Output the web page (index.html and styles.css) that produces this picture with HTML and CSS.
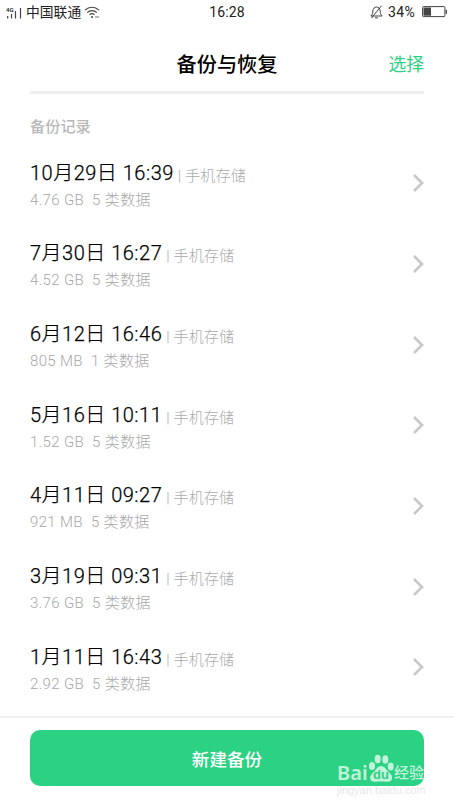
FILE: index.html
```html
<!DOCTYPE html>
<html lang="zh-CN">
<head>
    <meta charset="UTF-8">
    <meta name="viewport" content="width=device-width, initial-scale=1.0">
    <title>备份与恢复</title>
    <link rel="stylesheet" href="styles.css">
</head>
<body>
    <!-- Status bar -->
    <div class="status-bar">
        <div class="status-left">
            <svg class="signal" width="19" height="14" viewBox="0 0 19 14">
                <text x="0" y="5.5" class="network">4G</text>
                <path d="M1.7 10v2.5M5.5 8v4.5M9.5 5v7.5M14.5 2v10.5" stroke="#444" stroke-width="1.2" fill="none"/>
            </svg>
            <span class="carrier">中国联通</span>
            <svg class="wifi" width="16" height="13" viewBox="0 0 16 13" fill="none" stroke="#444" stroke-width="1.1">
                <path d="M1 4.2C5 .2 11 .2 15 4.2M3.2 6.6c2.8-2.7 6.8-2.7 9.6 0M5.5 8.8c1.5-1.4 3.5-1.4 5 0"/>
                <path d="M7 11h2M11.5 11h1M13.5 11h1" stroke-width="1.5"/>
            </svg>
        </div>
        <span class="clock">16:28</span>
        <div class="status-right">
            <svg class="mute" width="13" height="14" viewBox="0 0 13 14" fill="none" stroke="#444" stroke-width="1">
                <path d="M.8 11c1.800-1.300 1.800-3 2-5C3 3.500 4.600 2 6.500 2s3.500 1.500 3.700 4c.2 2 .2 3.700 2 5zM5 12.900h3M11.500 .7L1.500 13"/>
            </svg>
            <span class="percent">34%</span>
            <svg class="battery" width="26" height="12" viewBox="0 0 26 12">
                <rect x=".6" y=".6" width="22.3" height="10" rx=".8" fill="none" stroke="#444" stroke-width="1"/>
                <rect x="1.5" y="1.5" width="7.5" height="8.2" fill="#444"/>
                <path d="M24.3 3.7v4" stroke="#444" stroke-width="1.3"/>
            </svg>
        </div>
    </div>

    <header class="header">
        <h1>备份与恢复</h1>
        <a href="#" class="select-link">选择</a>
    </header>

    <main class="content">
        <h2>备份记录</h2>
        <ul id="backup-list" class="backup-list"></ul>
    </main>

    <footer class="footer">
        <button class="new-backup">新建备份</button>
        <div class="watermark">
            <div class="mark-name">
                <span class="mark-latin">Bai</span>
                <span class="paw">
                    <svg width="27" height="29" viewBox="0 0 27 29">
                        <ellipse cx="4" cy="12" rx="3" ry="4"/>
                        <ellipse cx="9.7" cy="5" rx="3" ry="4.3"/>
                        <ellipse cx="17.3" cy="5.5" rx="3" ry="4.3"/>
                        <ellipse cx="22.7" cy="12.5" rx="3" ry="4"/>
                        <path d="M13 12c-4 0-4.5 4-7.5 6.2-6 4.5-3 10.2 1.5 9.6 3-.4 8-.4 12 0 5 .6 7.5-5 2-9.6C18 15.800 17 12 13 12z"/>
                    </svg>
                    <span class="du">du</span>
                </span>
                <span class="mark-cjk">经验</span>
            </div>
            <div class="mark-url">jingyan.baidu.com</div>
        </div>
    </footer>

    <script src="script.js"></script>
</body>
</html>
```

FILE: styles.css
```css
* {
    box-sizing: border-box;
}
body {
    margin: 0;
    height: 807px;
    background-color: #fff;
    color: #000;
    font-family: Roboto, "Noto Sans CJK SC", sans-serif;
    overflow: hidden;
    display: flex;
    flex-direction: column;
}
/* Status bar */
.status-bar {
    display: grid;
    grid-template-columns: 1fr auto 1fr;
    align-items: center;
    flex: none;
    height: 24px;
    padding: 0 6px;
    font-size: 14px;
    line-height: 24px;
    color: #222;
}
.status-left,
.status-right {
    display: flex;
    align-items: center;
}
.status-right {
    justify-content: flex-end;
}
.network {
    font-size: 6px;
    font-weight: bold;
    fill: #333;
}
.signal {
    margin-top: 2px;
    margin-right: 1px;
}
.carrier {
    font-size: 13.8px;
}
.clock {
    letter-spacing: 0.1px;
}
.wifi {
    margin-left: 3px;
}
.percent {
    margin: 0 7px 0 5px;
    letter-spacing: 0.3px;
}
/* Page header */
.header {
    display: grid;
    grid-template-columns: 1fr auto 1fr;
    align-items: center;
    flex: none;
    height: 70px;
    margin: 0 30px;
    padding-top: 14px;
    border-bottom: 3px solid #eee;
}
h1 {
    grid-column: 2;
    margin: 0;
    font-size: 20.2px;
    line-height: 30px;
    font-weight: 500;
}
.select-link {
    justify-self: end;
    font-size: 17.8px;
    line-height: 30px;
    color: #2bd283;
    text-decoration: none;
}
/* Backup records */
.content {
    flex: none;
    height: 622px;
    padding: 22px 30px 0;
}
h2 {
    margin: 0;
    height: 37px;
    font-size: 15.2px;
    line-height: 22px;
    font-weight: 500;
    color: #b8b8b8;
}
.backup-list {
    margin: 0;
    padding: 0;
    list-style: none;
}
.backup-list li {
    display: flex;
    align-items: center;
    justify-content: space-between;
    height: 80.65px;
    padding-bottom: 20px;
}
.record {
    padding-top: 2px;
}
.title {
    font-size: 20px;
    font-weight: 300;
    line-height: 30px;
    letter-spacing: 0.5px;
    white-space: nowrap;
    -webkit-text-stroke: 0.25px #000;
}
.storage {
    position: relative;
    top: 1px;
    margin-left: 4px;
    font-size: 15.1px;
    letter-spacing: 0.1px;
    color: #aaa;
    -webkit-text-stroke: 0;
}
.detail {
    margin-top: -1px;
    font-size: 15px;
    font-weight: 300;
    line-height: 22px;
    letter-spacing: 0.35px;
    color: #a8a8a8;
    white-space: pre;
}
.arrow {
    fill: none;
    stroke: #c8c8c8;
    stroke-width: 2.6;
}
/* Bottom button */
.footer {
    position: relative;
    flex: 1;
    padding: 12px 30px;
    border-top: 2px solid #f0f0f0;
}
.new-backup {
    display: block;
    width: 100%;
    height: 56px;
    padding: 0;
    border: none;
    border-radius: 10px;
    background-color: #2bd283;
    color: #fff;
    font-family: inherit;
    font-size: 17.6px;
    font-weight: 500;
}
/* Watermark over the button corner */
.watermark {
    position: absolute;
    left: 337px;
    top: 35px;
    color: rgba(255, 255, 255, 0.72);
}
.mark-name {
    display: flex;
    align-items: flex-end;
    height: 30px;
    white-space: nowrap;
}
.mark-latin {
    width: 31px;
    font: 600 20px/20px "Noto Sans", sans-serif;
}
.paw {
    position: relative;
    width: 26px;
    height: 29px;
    fill: rgba(255, 255, 255, 0.72);
}
.du {
    position: absolute;
    left: 0;
    bottom: 1px;
    width: 26px;
    text-align: center;
    font: bold 13px/15px "Liberation Sans", sans-serif;
    color: #2bd283;
}
.mark-cjk {
    font-size: 15px;
    line-height: 20px;
    font-weight: 500;
}
.mark-url {
    font: 11px/14px "Liberation Sans", sans-serif;
    color: #e8e8e8;
}
```

FILE: script.js
```js
var backups = [
    { time: '10月29日 16:39', size: '4.76 GB', types: 5 },
    { time: '7月30日 16:27', size: '4.52 GB', types: 5 },
    { time: '6月12日 16:46', size: '805 MB', types: 1 },
    { time: '5月16日 10:11', size: '1.52 GB', types: 5 },
    { time: '4月11日 09:27', size: '921 MB', types: 5 },
    { time: '3月19日 09:31', size: '3.76 GB', types: 5 },
    { time: '1月11日 16:43', size: '2.92 GB', types: 5 }
];

var list = document.getElementById('backup-list');

backups.forEach(function(backup) {
    var item = document.createElement('li');
    item.innerHTML = '<div class="record"><div class="title">' + backup.time +
        '<span class="storage">| 手机存储</span></div>' +
        '<div class="detail">' + backup.size + '  ' + backup.types + ' 类数据</div></div>' +
        '<svg class="arrow" width="12" height="20" viewBox="0 0 12 20"><path d="M2 2l8 8-8 8"/></svg>';
    list.appendChild(item);
});
```
